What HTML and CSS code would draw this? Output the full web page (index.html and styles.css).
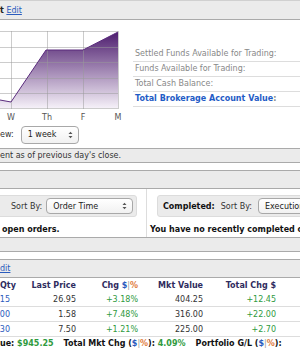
FILE: index.html
```html
<!DOCTYPE html>
<html lang="en">
<head>
  <meta charset="UTF-8" />
  <title>Account Overview</title>
  <link rel="stylesheet" href="styles.css">
</head>
<body>
  <div class="bar topbar"><b class="title">t</b> <a href="#">Edit</a></div>

  <div class="summary">
    <svg class="chart" width="125" height="104" viewBox="0 0 125 104">
      <defs>
        <linearGradient id="fill" x1="0" y1="0" x2="0" y2="1">
          <stop offset="0" stop-color="#4d1d6e"/>
          <stop offset="1" stop-color="#f5f0f8"/>
        </linearGradient>
      </defs>
      <path d="M0 80 L11 82 L46 30 L83 30 L118 12 L118 88 L0 88 Z" fill="url(#fill)"/>
      <g stroke="#9a9a9a" stroke-opacity="0.5" stroke-width="1">
        <line x1="0" y1="11.5" x2="118" y2="11.5"/>
        <line x1="0" y1="27.5" x2="118" y2="27.5"/>
        <line x1="0" y1="42.5" x2="118" y2="42.5"/>
        <line x1="0" y1="58.5" x2="118" y2="58.5"/>
        <line x1="0" y1="73.5" x2="118" y2="73.5"/>
        <line x1="0" y1="88.5" x2="118" y2="88.5"/>
        <line x1="11.5" y1="11" x2="11.5" y2="89"/>
        <line x1="47.5" y1="11" x2="47.5" y2="89"/>
        <line x1="83.5" y1="11" x2="83.5" y2="89"/>
        <line x1="118.5" y1="11" x2="118.5" y2="89"/>
      </g>
      <polyline points="0,80 11,82 46,30 83,30 118,12" fill="none" stroke="#5a2b7d" stroke-width="1"/>
      <g class="axis" text-anchor="middle">
        <text x="11" y="100">W</text>
        <text x="47" y="100">Th</text>
        <text x="83" y="100">F</text>
        <text x="118" y="100">M</text>
      </g>
    </svg>

    <ul class="balances">
      <li>Settled Funds Available for Trading:</li>
      <li>Funds Available for Trading:</li>
      <li>Total Cash Balance:</li>
      <li class="total">Total Brokerage Account Value<span>:</span></li>
    </ul>
  </div>

  <div class="view-row">
    ew:
    <span class="select week">1 week <svg class="arrows" width="5" height="8" viewBox="0 0 5 8"><path d="M0.5 3 L2.5 0.8 L4.5 3 Z M0.5 5 L2.5 7.2 L4.5 5 Z" fill="#555"/></svg></span>
  </div>

  <div class="bar note">ent as of previous day's close.</div>

  <div class="bar orders-head"></div>

  <div class="orders">
    <div class="panel open">
      <div class="toolbar">
        Sort By:
        <span class="select order-time">Order Time <svg class="arrows" width="5" height="8" viewBox="0 0 5 8"><path d="M0.5 3 L2.5 0.8 L4.5 3 Z M0.5 5 L2.5 7.2 L4.5 5 Z" fill="#555"/></svg></span>
      </div>
      <p>open orders.</p>
    </div>
    <div class="panel done">
      <div class="toolbar">
        <b>Completed:</b>
        <span class="sort">Sort By:</span>
        <span class="select exec">Execution Time</span>
      </div>
      <p>You have no recently completed orders.</p>
    </div>
  </div>

  <div class="bar orders-foot"></div>

  <div class="bar positions-head"><a href="#">dit</a></div>

  <table class="positions">
    <thead>
      <tr>
        <th class="qty">Qty</th>
        <th>Last Price</th>
        <th>Chg <span class="usd">$</span><span class="sep">|</span><span class="pct">%</span></th>
        <th>Mkt Value</th>
        <th>Total Chg $</th>
        <th></th>
      </tr>
    </thead>
    <tbody>
      <tr>
        <td class="qty">15</td>
        <td>26.95</td>
        <td class="up">+3.18%</td>
        <td>404.25</td>
        <td class="up">+12.45</td>
        <td></td>
      </tr>
      <tr>
        <td class="qty">200</td>
        <td>1.58</td>
        <td class="up">+7.48%</td>
        <td>316.00</td>
        <td class="up">+22.00</td>
        <td></td>
      </tr>
      <tr>
        <td class="qty">30</td>
        <td>7.50</td>
        <td class="up">+1.21%</td>
        <td>225.00</td>
        <td class="up">+2.70</td>
        <td></td>
      </tr>
    </tbody>
  </table>

  <div class="totals">
    <span>ue: <em class="up">$945.25</em></span>
    <span>Total Mkt Chg (<span class="usd">$</span><span class="sep">|</span><span class="pct">%</span>): <em class="up">4.09%</em></span>
    <span>Portfolio G/L (<span class="usd">$</span><span class="sep">|</span><span class="pct">%</span>):</span>
  </div>
</body>
</html>
```

FILE: styles.css
```css
body {
  margin: 0;
  width: 300px;
  height: 350px;
  overflow: hidden;
  font-family: "DejaVu Sans", Verdana, sans-serif;
  font-size: 8px;
  color: #333;
  background-color: #fff;
}

a {
  color: #2a5bbd;
}

.bar {
  background-color: #ebebeb;
  border-top: 1px solid #aaa;
  border-bottom: 1px solid #aaa;
  white-space: nowrap;
  overflow: hidden;
}

.topbar {
  height: 18px;
  line-height: 20px;
  border-top-color: #d0d0d0;
}

.title {
  color: #222;
}

/* chart + balances */
.summary {
  display: flex;
  height: 104px;
}

.chart {
  flex: none;
  display: block;
  margin-right: 8px;
}

.axis {
  font-family: "DejaVu Sans", Verdana, sans-serif;
  font-size: 8px;
  fill: #555;
}

.balances {
  flex: 1;
  list-style: none;
  margin: 27px 0 0;
  padding: 0;
  white-space: nowrap;
  overflow: hidden;
}

.balances li {
  height: 14px;
  line-height: 14px;
  padding-left: 2px;
  border-bottom: 1px solid #ddd;
  color: #888;
}

.balances .total {
  color: #1f5cc6;
  font-weight: bold;
}

.balances .total span {
  color: #888;
}

/* select boxes */
.view-row {
  height: 20px;
  padding-top: 1px;
  box-sizing: border-box;
  display: flex;
  align-items: center;
  gap: 7px;
}

.select {
  display: inline-flex;
  align-items: center;
  justify-content: space-between;
  box-sizing: border-box;
  height: 18px;
  padding: 0 5px 0 6px;
  background: linear-gradient(#fff, #f1f1f1);
  border: 1px solid #a8a8a8;
  border-radius: 4px;
  color: #222;
  white-space: nowrap;
}

.week {
  width: 58px;
}

.arrows {
  flex: none;
}

.note {
  margin-top: 4px;
  height: 13px;
  line-height: 13px;
  color: #333;
}

.orders-head {
  margin-top: 7px;
  height: 17px;
}

/* orders */
.orders {
  display: flex;
  height: 48px;
  overflow: hidden;
}

.panel {
  padding-top: 6px;
  white-space: nowrap;
}

.panel p {
  margin: 8px 0 0;
  line-height: 10px;
  font-weight: bold;
  color: #111;
}

.open {
  width: 146px;
  border-right: 1px solid #ddd;
}

.open p {
  padding-left: 2px;
}

.done {
  flex: 1;
  padding-left: 3px;
  overflow: hidden;
}

.toolbar {
  display: flex;
  align-items: center;
  height: 22px;
  box-sizing: border-box;
  background-color: #ebebeb;
  border: 1px solid #dcdcdc;
  border-radius: 3px;
}

.open .toolbar {
  margin-left: -5px;
  margin-right: 9px;
  padding-left: 15px;
  gap: 4px;
}

.order-time {
  height: 16px;
  width: 87px;
}

.done .toolbar {
  margin-left: 7px;
  margin-right: -40px;
  padding-left: 5px;
}

.done .toolbar b {
  color: #111;
}

.sort {
  margin-left: 6px;
  margin-right: 6px;
}

.exec {
  height: 16px;
  width: 90px;
}

.orders-foot {
  height: 13px;
}

.positions-head {
  margin-top: 7px;
  height: 17px;
  line-height: 18px;
}

/* positions table */
.positions {
  width: 300px;
  table-layout: fixed;
  border-collapse: collapse;
}

.positions th,
.positions td {
  padding: 0;
  text-align: right;
  white-space: nowrap;
}

.positions th {
  height: 14px;
  color: #2f2c5e;
}

.positions td {
  height: 14px;
  border-bottom: 1px solid #ddd;
}

.positions th:nth-child(1) { width: 13px; }
.positions th:nth-child(2) { width: 63px; }
.positions th:nth-child(3) { width: 62px; }
.positions th:nth-child(4) { width: 65px; }
.positions th:nth-child(5) { width: 73px; }

.positions td.qty {
  color: #2a5bbd;
  padding-right: 3px;
  text-align: right;
  direction: rtl;
  overflow: hidden;
}

.up {
  color: #2f9a3e;
  font-style: normal;
}

.usd {
  color: #2a5bbd;
}

.sep {
  color: #999;
  font-weight: normal;
}

.pct {
  color: #e0793a;
}

.totals {
  display: flex;
  gap: 10px;
  height: 14px;
  line-height: 14px;
  font-weight: bold;
  color: #111;
  white-space: nowrap;
}
```
